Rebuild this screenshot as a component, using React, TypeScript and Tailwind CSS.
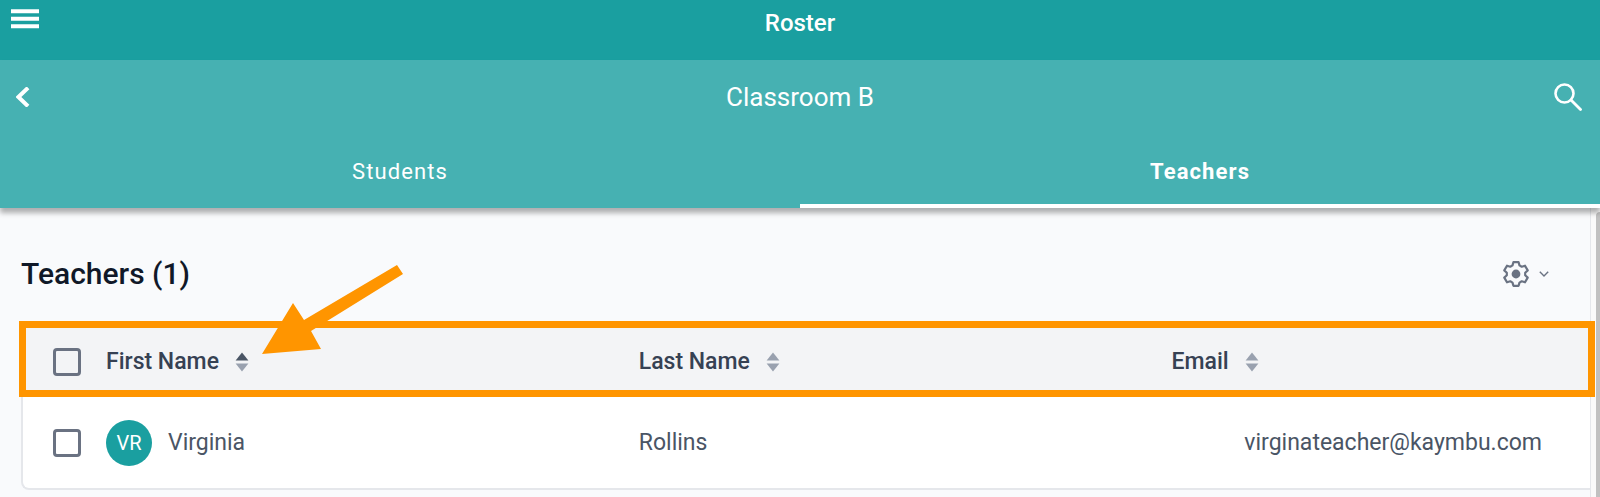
import React, { useState } from "react";

type SortKey = "firstName" | "lastName" | "email";

interface Teacher {
  id: string;
  firstName: string;
  lastName: string;
  email: string;
}

const teachers: Teacher[] = [
  { id: "1", firstName: "Virginia", lastName: "Rollins", email: "virginateacher@kaymbu.com" },
];

const columns: { key: SortKey; label: string }[] = [
  { key: "firstName", label: "First Name" },
  { key: "lastName", label: "Last Name" },
  { key: "email", label: "Email" },
];

const SortIcon: React.FC<{ active: boolean }> = ({ active }) => (
  <svg width="14" height="20" viewBox="0 0 14 20" aria-hidden="true">
    <path d="M7 0.5 13.4 8.5H0.6Z" className={active ? "fill-gray-600" : "fill-gray-400"} />
    <path d="M7 19.5 13.4 11.5H0.6Z" className="fill-gray-400" />
  </svg>
);

const GearIcon = () => (
  <svg width="26" height="26" viewBox="-13 -13 26 26" aria-hidden="true">
    <path
      d="M-3.5-8.6-2.6-11.8H2.6L3.5-8.6 5.7-7.3 9-8.3 11.7-3.6 9.2-1.3V1.3L11.7 3.6 9 8.3 5.7 7.3 3.5 8.6 2.6 11.8H-2.6L-3.5 8.6-5.7 7.3-9 8.3-11.7 3.6-9.2 1.3V-1.3L-11.7-3.6-9-8.3-5.7-7.3Z"
      fill="none"
      stroke="currentColor"
      strokeWidth="2.2"
      strokeLinejoin="round"
    />
    <circle r="4.4" fill="currentColor" />
  </svg>
);

const checkboxClass =
  "block size-7 appearance-none rounded border-3 border-gray-500 checked:bg-[#1a9fa0]";

const App: React.FC = () => {
  const [tab, setTab] = useState<"students" | "teachers">("teachers");
  const [sortKey, setSortKey] = useState<SortKey>("firstName");
  const [selected, setSelected] = useState<string[]>([]);

  const rows = [...teachers].sort((a, b) => a[sortKey].localeCompare(b[sortKey]));
  const allSelected = selected.length === teachers.length;

  const toggle = (id: string) =>
    setSelected(selected.includes(id) ? selected.filter((s) => s !== id) : [...selected, id]);

  const tabClass = (active: boolean) =>
    active
      ? "flex-1 border-b-4 border-white pt-1 text-[22px] leading-8 font-bold tracking-wider"
      : "flex-1 border-b-4 border-transparent pt-1 text-[22px] leading-8 tracking-wider";

  return (
    <div className="flex min-h-screen flex-col bg-[#f9fafc] font-['Roboto',sans-serif] text-gray-700">
      {/* Top bar */}
      <header className="grid h-15 grid-cols-[1fr_auto_1fr] items-start bg-[#1a9fa0] px-[11px] pt-[7px] text-white">
        <button type="button" aria-label="Menu" className="w-7 pt-0.5">
          <svg width="28" height="20" viewBox="0 0 28 20" aria-hidden="true">
            <path d="M0 2.2H28M0 9.7H28M0 17.2H28" stroke="currentColor" strokeWidth="4" />
          </svg>
        </button>
        <h1 className="text-2xl font-medium">Roster</h1>
      </header>

      {/* Classroom bar with tabs */}
      <div className="relative z-10 flex h-[148px] flex-col justify-between bg-[#46b1b2] text-white shadow-[0_5px_5px_rgba(0,0,0,0.3)]">
        <div className="grid grid-cols-[1fr_auto_1fr] items-center px-4 pt-[21px]">
          <button type="button" aria-label="Back" className="w-4">
            <svg width="14" height="20" viewBox="0 0 14 20" aria-hidden="true">
              <path d="M12 0.8 2.4 10 12 19.2" fill="none" stroke="currentColor" strokeWidth="4" />
            </svg>
          </button>
          <h2 className="text-[26px] leading-8">Classroom B</h2>
          <button type="button" aria-label="Search" className="justify-self-end pr-0.5">
            <svg width="28" height="28" viewBox="0 0 28 28" aria-hidden="true">
              <circle cx="10.5" cy="10.5" r="9" fill="none" stroke="currentColor" strokeWidth="2.6" />
              <path d="M17 17 26.5 26.5" stroke="currentColor" strokeWidth="2.8" strokeLinecap="round" />
            </svg>
          </button>
        </div>
        <div className="flex" role="tablist">
          <button
            type="button"
            role="tab"
            aria-selected={tab === "students"}
            onClick={() => setTab("students")}
            className={tabClass(tab === "students")}
          >
            <span className="block pb-4">Students</span>
          </button>
          <button
            type="button"
            role="tab"
            aria-selected={tab === "teachers"}
            onClick={() => setTab("teachers")}
            className={tabClass(tab === "teachers")}
          >
            <span className="block pb-4">Teachers</span>
          </button>
        </div>
      </div>

      {/* Content */}
      <div className="flex flex-1">
        <main className="min-w-0 flex-1 pb-2 pl-[21px]">
          <div className="flex items-center justify-between pt-[46px] pr-[41px] pb-[31px]">
            <h3 className="text-[30px] leading-10 font-medium text-gray-900">
              Teachers ({teachers.length})
            </h3>
            <button type="button" aria-label="Table settings" className="flex items-center gap-2.5 text-gray-500">
              <GearIcon />
              <svg width="10" height="6" viewBox="0 0 10 6" aria-hidden="true">
                <path d="M0.8 0.8 5 5 9.2 0.8" fill="none" stroke="currentColor" strokeWidth="1.4" />
              </svg>
            </button>
          </div>

          <div className="relative">
            <div className="overflow-hidden rounded-l-lg border-2 border-r-0 border-gray-200 bg-white">
              <table className="w-full table-fixed text-left text-[23px] leading-8">
                <thead className="bg-gray-100">
                  <tr className="h-[70px]">
                    <th className="w-[83px] pl-[30px]">
                      <input
                        type="checkbox"
                        aria-label="Select all teachers"
                        checked={allSelected}
                        onChange={() => setSelected(allSelected ? [] : teachers.map((t) => t.id))}
                        className={checkboxClass}
                      />
                    </th>
                    {columns.map((col) => (
                      <th key={col.key} className="w-[34%] font-medium last:w-auto">
                        <button
                          type="button"
                          onClick={() => setSortKey(col.key)}
                          className="flex items-center gap-4"
                        >
                          {col.label}
                          <SortIcon active={sortKey === col.key} />
                        </button>
                      </th>
                    ))}
                  </tr>
                </thead>
                <tbody className="text-gray-600">
                  {rows.map((t) => (
                    <tr key={t.id} className="h-[91px]">
                      <td className="pl-[30px]">
                        <input
                          type="checkbox"
                          aria-label={`Select ${t.firstName} ${t.lastName}`}
                          checked={selected.includes(t.id)}
                          onChange={() => toggle(t.id)}
                          className={checkboxClass}
                        />
                      </td>
                      <td>
                        <div className="flex items-center gap-4">
                          <span className="flex size-[46px] items-center justify-center rounded-full bg-[#1a9fa0] text-xl text-white">
                            {t.firstName[0]}
                            {t.lastName[0]}
                          </span>
                          {t.firstName}
                        </div>
                      </td>
                      <td>{t.lastName}</td>
                      <td className="pr-12 text-right">{t.email}</td>
                    </tr>
                  ))}
                </tbody>
              </table>
            </div>

            {/* Highlight around the sortable header row */}
            <div className="pointer-events-none absolute -top-1 -right-[5px] -left-0.5 z-10 h-[76px] border-7 border-[#ff9500]" />
            <svg
              className="pointer-events-none absolute -top-[63px] left-[239px] z-10"
              width="146"
              height="96"
              viewBox="0 0 146 96"
              aria-hidden="true"
            >
              <path d="M2 92 33 41 44 58 137 3 143 12 51 69 61 87Z" fill="#ff9500" />
            </svg>
          </div>
        </main>

        {/* Scroll track */}
        <div className="flex w-2.5 flex-col border-l border-gray-200 bg-[#fafafa] pt-1 pl-[5px]">
          <div className="flex-1 rounded-tl-md bg-[#c1c1c1]" />
        </div>
      </div>
    </div>
  );
};

export default App;
